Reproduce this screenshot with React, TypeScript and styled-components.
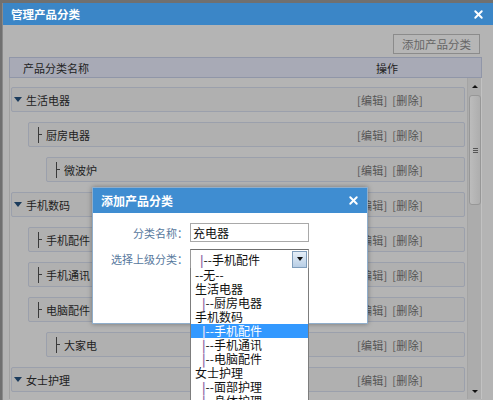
import React from "react";
import styled, { createGlobalStyle } from "styled-components";
import { X } from "lucide-react";

const GlobalStyle = createGlobalStyle`
  html, body {
    margin: 0;
    padding: 0;
  }
  body {
    background: #707070;
    font-family: "Noto Sans CJK SC", "Noto Sans", sans-serif;
    overflow: hidden;
  }
`;

const Page = styled.div`
  position: relative;
  width: 493px;
  height: 400px;
  overflow: hidden;
  box-sizing: border-box;
  padding: 3px 0 0 2px;
`;

const OuterDialog = styled.div`
  height: 420px;
  background: #b4b4b4;
  border-left: 1px solid #8a8a8a;
  display: flex;
  flex-direction: column;
`;

const TitleBar = styled.div<{ $tall?: boolean; $tone?: string }>`
  height: ${(p) => (p.$tall ? 25 : 22)}px;
  flex-shrink: 0;
  background: ${(p) => p.$tone || "#3b86c7"};
  color: #fff;
  font-weight: bold;
  font-size: ${(p) => (p.$tall ? 12 : 11.5)}px;
  display: flex;
  align-items: center;
  justify-content: space-between;
  padding: 0 ${(p) => (p.$tall ? 7 : 8)}px 0 8px;
`;

const Toolbar = styled.div`
  display: flex;
  justify-content: flex-end;
  padding: 9px 13px 0 0;
`;

const ToolButton = styled.div`
  height: 20px;
  box-sizing: border-box;
  border: 1px solid #8b8b8b;
  background: #b6b6b6;
  color: #666;
  font-size: 11.5px;
  padding: 0 8px;
  display: flex;
  align-items: center;
`;

const Table = styled.div`
  margin: 3px 11px 0 6px;
`;

const HeaderRow = styled.div`
  height: 21px;
  box-sizing: border-box;
  border: 1px solid #9096a8;
  background: #a8aab6;
  display: flex;
  align-items: center;
  font-size: 11px;
  color: #222;
`;

const HeaderCell = styled.div<{ $width?: number }>`
  ${(p) => (p.$width ? `width: ${p.$width}px;` : "flex: 1; padding-left: 13px;")}
`;

const TableBody = styled.div`
  height: 321px;
  display: flex;
  border-left: 1px solid #a2a2a2;
  overflow: hidden;
`;

const RowList = styled.div`
  flex: 1;
  padding: 9px 2px 0 1px;
`;

const Row = styled.div<{ $level: number }>`
  height: 25px;
  box-sizing: border-box;
  margin: 0 0 10px ${(p) => [0, 17, 35][p.$level]}px;
  border: 1px solid #9ba0ac;
  border-radius: 2px;
  background: #b0b0b0;
  display: flex;
  align-items: center;
  font-size: 11px;
  color: #222;
  padding: 0 41px 0 ${(p) => (p.$level === 0 ? 2 : 9)}px;
`;

const Caret = styled.svg`
  width: 8px;
  height: 5px;
  margin-right: 4px;
`;

const Branch = styled.span`
  position: relative;
  width: 7px;
  height: 16px;
  border-left: 1px solid #3a3a3a;
  box-sizing: border-box;
  margin-right: 1px;
  &::after {
    content: "";
    position: absolute;
    left: 0;
    top: 7px;
    width: 3px;
    border-top: 1px solid #3a3a3a;
  }
`;

const RowName = styled.span`
  flex: 1;
`;

const Actions = styled.span`
  color: #555;
  word-spacing: 2px;
  letter-spacing: 0.3px;
`;

const Scrollbar = styled.div`
  width: 15px;
  box-sizing: border-box;
  background: #acacac;
  border-left: 1px solid #a4a4a4;
  border-right: 1px solid #c2c2c2;
  display: flex;
  flex-direction: column;
`;

const ScrollArrow = styled.div<{ $down?: boolean }>`
  height: 16px;
  display: flex;
  align-items: center;
  justify-content: center;
  &::before {
    content: "";
    border-left: 3px solid transparent;
    border-right: 3px solid transparent;
    ${(p) => (p.$down ? "border-top: 3px solid #111;" : "border-bottom: 3px solid #111;")}
  }
`;

const ScrollTrack = styled.div`
  flex: 1;
`;

const Thumb = styled.div`
  height: 110px;
  margin: 1px 0 0 1px;
  width: 12px;
  box-sizing: border-box;
  border: 1px solid #979797;
  border-radius: 3px;
  background: linear-gradient(to right, #bcbcbc, #aeaeae);
  display: flex;
  flex-direction: column;
  align-items: center;
  justify-content: center;
  gap: 1px;
`;

const Grip = styled.span`
  width: 5px;
  border-top: 1px solid #555;
`;

const Modal = styled.div`
  position: absolute;
  left: 92px;
  top: 187px;
  width: 276px;
  height: 137px;
  box-sizing: border-box;
  border: 1px solid #90aecb;
  background: #fff;
  box-shadow: 0 0 5px rgba(0, 0, 0, 0.35);
  display: flex;
  flex-direction: column;
`;

const Form = styled.div`
  display: grid;
  grid-template-columns: 95px 119px;
  column-gap: 2px;
  row-gap: 7px;
  padding-top: 10px;
  align-items: center;
`;

const Label = styled.label`
  text-align: right;
  color: #57789d;
  font-size: 11px;
`;

const TextInput = styled.div`
  height: 19px;
  box-sizing: border-box;
  border: 1px solid #a9a9a9;
  font-size: 12px;
  color: #111;
  padding-left: 2px;
  display: flex;
  align-items: center;
`;

const SelectBox = styled.div`
  position: relative;
  height: 20px;
  box-sizing: border-box;
  border: 1px solid #9a9a9a;
  border-top-color: #6f6f6f;
  font-size: 12px;
  color: #111;
  padding-left: 9px;
  display: flex;
  align-items: center;
`;

const SelectText = styled.span`
  flex: 1;
`;

const DropButton = styled.span`
  width: 15px;
  height: 17px;
  margin-right: 1px;
  box-sizing: border-box;
  border: 1px solid #7f9dbb;
  background: linear-gradient(#e6eff8, #b8cee5);
  display: flex;
  align-items: center;
  justify-content: center;
  &::before {
    content: "";
    border-left: 3.5px solid transparent;
    border-right: 3.5px solid transparent;
    border-top: 4px solid #111;
  }
`;

const Pipe = styled.span<{ $light?: boolean }>`
  color: ${(p) => (p.$light ? "#e8e0f0" : "#8e67a6")};
  font-weight: bold;
`;

const DropList = styled.div`
  position: absolute;
  left: -1px;
  top: 100%;
  width: 119px;
  box-sizing: border-box;
  background: #fff;
  border: 1px solid #7d7d7d;
  border-top: none;
  z-index: 2;
`;

const Option = styled.div<{ $selected?: boolean; $child?: boolean }>`
  height: 14px;
  line-height: 14px;
  font-size: 12px;
  white-space: nowrap;
  padding-left: ${(p) => (p.$child ? 11 : 4)}px;
  background: ${(p) => (p.$selected ? "#3399ff" : "transparent")};
  color: ${(p) => (p.$selected ? "#fff" : "#111")};
`;

type Item = { name: string; level: number };

const rows: Item[] = [
  { name: "生活电器", level: 0 },
  { name: "厨房电器", level: 1 },
  { name: "微波炉", level: 2 },
  { name: "手机数码", level: 0 },
  { name: "手机配件", level: 1 },
  { name: "手机通讯", level: 1 },
  { name: "电脑配件", level: 1 },
  { name: "大家电", level: 2 },
  { name: "女士护理", level: 0 },
  { name: "面部护理", level: 1 },
];

const options: Item[] = [
  { name: "--无--", level: 0 },
  { name: "生活电器", level: 0 },
  { name: "厨房电器", level: 1 },
  { name: "手机数码", level: 0 },
  { name: "手机配件", level: 1 },
  { name: "手机通讯", level: 1 },
  { name: "电脑配件", level: 1 },
  { name: "女士护理", level: 0 },
  { name: "面部护理", level: 1 },
  { name: "身体护理", level: 1 },
];

const App: React.FC = () => {
  return (
    <Page>
      <GlobalStyle />
      <OuterDialog>
        <TitleBar>
          <span>管理产品分类</span>
          <X size={13} strokeWidth={3.5} />
        </TitleBar>
        <Toolbar>
          <ToolButton>添加产品分类</ToolButton>
        </Toolbar>
        <Table>
          <HeaderRow>
            <HeaderCell>产品分类名称</HeaderCell>
            <HeaderCell $width={105}>操作</HeaderCell>
          </HeaderRow>
          <TableBody>
            <RowList>
              {rows.map((r, i) => (
                <Row key={i} $level={r.level}>
                  {r.level === 0 ? (
                    <Caret viewBox="0 0 8 5">
                      <path d="M0 0 L8 0 L4 5 Z" fill="#1b3b5c" />
                    </Caret>
                  ) : (
                    <Branch />
                  )}
                  <RowName>{r.name}</RowName>
                  <Actions>[编辑] [删除]</Actions>
                </Row>
              ))}
            </RowList>
            <Scrollbar>
              <ScrollArrow />
              <ScrollTrack>
                <Thumb>
                  <Grip />
                  <Grip />
                  <Grip />
                </Thumb>
              </ScrollTrack>
              <ScrollArrow $down />
            </Scrollbar>
          </TableBody>
        </Table>
      </OuterDialog>

      <Modal>
        <TitleBar $tall $tone="#3f8dd1">
          <span>添加产品分类</span>
          <X size={13} strokeWidth={3.5} />
        </TitleBar>
        <Form>
          <Label>分类名称：</Label>
          <TextInput>充电器</TextInput>
          <Label>选择上级分类：</Label>
          <SelectBox>
            <SelectText>
              <Pipe>|</Pipe>--手机配件
            </SelectText>
            <DropButton />
            <DropList>
              {options.map((o, i) => {
                const selected = i === 4;
                return (
                  <Option key={i} $child={o.level === 1} $selected={selected}>
                    {o.level === 1 && <Pipe $light={selected}>|</Pipe>}
                    {o.level === 1 ? "--" : ""}
                    {o.name}
                  </Option>
                );
              })}
            </DropList>
          </SelectBox>
        </Form>
      </Modal>
    </Page>
  );
};

export default App;
